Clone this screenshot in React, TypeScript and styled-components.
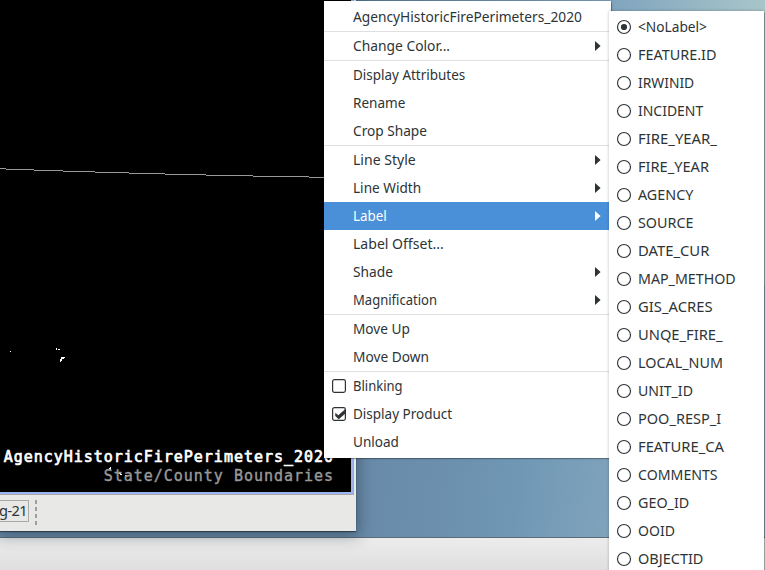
import React, { useLayoutEffect, useRef, useState } from "react";
import styled, { createGlobalStyle, css } from "styled-components";

const GlobalStyle = createGlobalStyle`
  html, body { margin: 0; padding: 0; overflow: hidden; }
  * { box-sizing: border-box; }
`;

const Desktop = styled.div`
  position: relative;
  display: flex;
  flex-direction: column;
  justify-content: flex-end;
  width: 765px;
  height: 570px;
  overflow: hidden;
  background:
    linear-gradient(97deg, #6a8cab 50%, #6b8fad 58%, #7098b5 68%, #80a3bc 80%, #8fb0c0 100%) 0 100% / 100% 50% no-repeat,
    linear-gradient(90deg, #55799b 0%, #5b7d9e 48%, #6b8eac 62%, #7ea3bd 79%, #a8c5c9 100%);
  color: #2e3436;
  font-family: "Noto Sans", "Open Sans", sans-serif;
  font-size: 14.6px;
`;

const Taskbar = styled.div`
  height: 33px;
  border-top: 1px solid #5d6b76;
  background: linear-gradient(#ececec, #dfdfdf);
`;

const AppWindow = styled.section`
  position: absolute;
  left: 0;
  top: 0;
  width: 356px;
  height: 531px;
  display: flex;
  flex-direction: column;
  background: #e8e8e6;
  box-shadow: 0 1px 1px rgba(25, 40, 52, 0.65), 0 2px 14px 3px rgba(20, 35, 45, 0.42);
`;

const MapFrame = styled.div`
  width: 354px;
  height: 495px;
  border: solid #a7a7a7;
  border-width: 0 1px 1px 0;
`;

const MapCanvas = styled.div`
  position: relative;
  width: 353px;
  height: 494px;
  border: solid #9db4f4;
  border-width: 0 2px 2px 0;
  background: #000;
`;

const MapDrawing = styled.svg`
  display: block;
`;

const Legend = styled.div`
  position: absolute;
  right: 17px;
  bottom: 6px;
  display: flex;
  flex-direction: column;
  align-items: flex-end;
  font: 15px/19px "DejaVu Sans Mono", monospace;
  letter-spacing: 0.98px;
  white-space: pre;
`;

const LegendLine = styled.span<{ $muted?: boolean }>`
  color: ${(p) => (p.$muted ? "#999" : "#fff")};
  -webkit-text-stroke: ${(p) => (p.$muted ? "0.4px #999" : "0.7px #fff")};
`;

const StatusBar = styled.div`
  display: flex;
  align-items: flex-start;
  gap: 6px;
  padding-top: 5px;
`;

const StatusField = styled.div`
  display: flex;
  justify-content: flex-end;
  width: 29px;
  height: 22px;
  padding-right: 1px;
  border: 1px solid #aaa;
  border-left: 0;
  line-height: 19px;
  letter-spacing: -0.6px;
  white-space: nowrap;
`;

const Grip = styled.div`
  width: 2px;
  height: 26px;
  background: repeating-linear-gradient(#a39e96 0 4px, transparent 4px 7px);
`;

const Menu = styled.div<{ $sub?: boolean }>`
  position: absolute;
  left: ${(p) => (p.$sub ? 609 : 324)}px;
  top: ${(p) => (p.$sub ? 11 : 1)}px;
  width: ${(p) => (p.$sub ? 155 : 287)}px;
  padding: 2px 0;
  background: #fff;
  box-shadow: 0 0 1px 0.5px rgba(0, 0, 0, 0.25), 0 0 3px rgba(0, 0, 0, 0.25);
`;

const Separator = styled.div`
  height: 1px;
  background: #dfdfdf;
`;

const Row = styled.div<{ $active?: boolean }>`
  display: grid;
  grid-template-columns: 14px 1fr 6px;
  column-gap: 7px;
  align-items: center;
  height: 28px;
  padding: 0 10px 0 8px;
  white-space: nowrap;
  ${(p) =>
    p.$active &&
    css`
      background: #4a90d9;
      color: #fff;
    `}
`;

const SubRow = styled(Row)`
  grid-template-columns: 14px 1fr;
`;

const Label = styled.span`
  display: inline-block;
  justify-self: start;
  transform-origin: 0 50%;
  padding-bottom: 2px;
  line-height: 20px;
`;

const Icon = styled.svg`
  display: block;
  overflow: visible;
`;

function FittedLabel({ text, width }: { text: string; width: number }) {
  const ref = useRef<HTMLSpanElement>(null);
  const [scale, setScale] = useState(1);
  useLayoutEffect(() => {
    if (ref.current) setScale((width - 0.5) / ref.current.offsetWidth);
  }, [text, width]);
  return (
    <Label ref={ref} style={{ transform: `scaleX(${scale})` }}>
      {text}
    </Label>
  );
}

const Check = ({ on }: { on: boolean }) => (
  <Icon width="14" height="14" viewBox="0 0 14 14" fill="none">
    <rect x="0.6" y="0.6" width="12.8" height="12.8" rx="1.8" stroke="#2e3436" strokeWidth="1.2" />
    {on && <path d="M3.6 6.4 6.3 8.6 13 2.8V6.4L6.7 12 3.6 8.9Z" fill="#2e3436" stroke="#2e3436" strokeWidth=".7" />}
  </Icon>
);

const Radio = ({ on }: { on: boolean }) => (
  <Icon width="14" height="14" viewBox="0 0 14 14" fill="none">
    <circle cx="7" cy="7" r="6.5" stroke="#2e3436" strokeWidth="1.15" />
    {on && <circle cx="7" cy="7" r="3.1" fill="#2e3436" />}
  </Icon>
);

const Arrow = () => (
  <Icon width="6" height="10" viewBox="0 0 6 10">
    <path d="M0 0 5.6 5 0 10Z" fill="currentColor" />
  </Icon>
);

type Item = { text: string; width: number; arrow?: boolean; active?: boolean; checked?: boolean };

const groups: Item[][] = [
  [{ text: "AgencyHistoricFirePerimeters_2020", width: 229.5 }],
  [{ text: "Change Color...", width: 98, arrow: true }],
  [
    { text: "Display Attributes", width: 113 },
    { text: "Rename", width: 52.5 },
    { text: "Crop Shape", width: 74.5 },
  ],
  [
    { text: "Line Style", width: 63, arrow: true },
    { text: "Line Width", width: 68.5, arrow: true },
    { text: "Label", width: 34.5, arrow: true, active: true },
    { text: "Label Offset...", width: 91 },
    { text: "Shade", width: 40, arrow: true },
    { text: "Magnification", width: 84.5, arrow: true },
  ],
  [
    { text: "Move Up", width: 57.5 },
    { text: "Move Down", width: 76.5 },
  ],
  [
    { text: "Blinking", width: 50.5, checked: false },
    { text: "Display Product", width: 99.5, checked: true },
    { text: "Unload", width: 46 },
  ],
];

const fields: [string, number][] = [
  ["<NoLabel>", 69], ["FEATURE.ID", 78.5], ["IRWINID", 56.5], ["INCIDENT", 65.5], ["FIRE_YEAR_", 79],
  ["FIRE_YEAR", 71.5], ["AGENCY", 55.5], ["SOURCE", 56.5], ["DATE_CUR", 71.5], ["MAP_METHOD", 98],
  ["GIS_ACRES", 75.5], ["UNQE_FIRE_", 85], ["LOCAL_NUM", 85], ["UNIT_ID", 55.5], ["POO_RESP_I", 84],
  ["FEATURE_CA", 86.5], ["COMMENTS", 80], ["GEO_ID", 51.5], ["OOID", 37], ["OBJECTID", 66],
];

const boundaryStops = [0, 6, 34, 63, 95, 129, 165, 206, 253, 309, 351];

export default function App() {
  return (
    <Desktop>
      <GlobalStyle />
      <Taskbar />
      <AppWindow>
        <MapFrame>
          <MapCanvas>
            <MapDrawing width="351" height="492" shapeRendering="crispEdges">
              {boundaryStops.slice(0, -1).map((x, i) => (
                <rect key={x} x={x} y={168 + i} width={boundaryStops[i + 1] - x} height="1" fill="#999" />
              ))}
              <path
                fill="#fff"
                d="M10 351h1v1h-1zM56 348h1v2h-1zM58 349h2v1h-2zM61 357h4v1h-1v1h-2v2h-1v1h-1v-3h1zM110 467h1v3h-1v-1h-1v-1h1zM119 473h2v1h1v1h-2v-1h-1zM125 475h2v1h-2z"
              />
            </MapDrawing>
            <Legend>
              <LegendLine>AgencyHistoricFirePerimeters_2020</LegendLine>
              <LegendLine $muted>State/County Boundaries</LegendLine>
            </Legend>
          </MapCanvas>
        </MapFrame>
        <StatusBar>
          <StatusField>
            <span>g-21</span>
          </StatusField>
          <Grip />
        </StatusBar>
      </AppWindow>
      <Menu>
        {groups.map((group, g) => (
          <React.Fragment key={g}>
            {g > 0 && <Separator />}
            {group.map((item) => (
              <Row key={item.text} $active={item.active}>
                {item.checked === undefined ? <span /> : <Check on={item.checked} />}
                <FittedLabel text={item.text} width={item.width} />
                {item.arrow && <Arrow />}
              </Row>
            ))}
          </React.Fragment>
        ))}
      </Menu>
      <Menu $sub>
        {fields.map(([text, width], i) => (
          <SubRow key={text}>
            <Radio on={i === 0} />
            <FittedLabel text={text} width={width} />
          </SubRow>
        ))}
      </Menu>
    </Desktop>
  );
}
